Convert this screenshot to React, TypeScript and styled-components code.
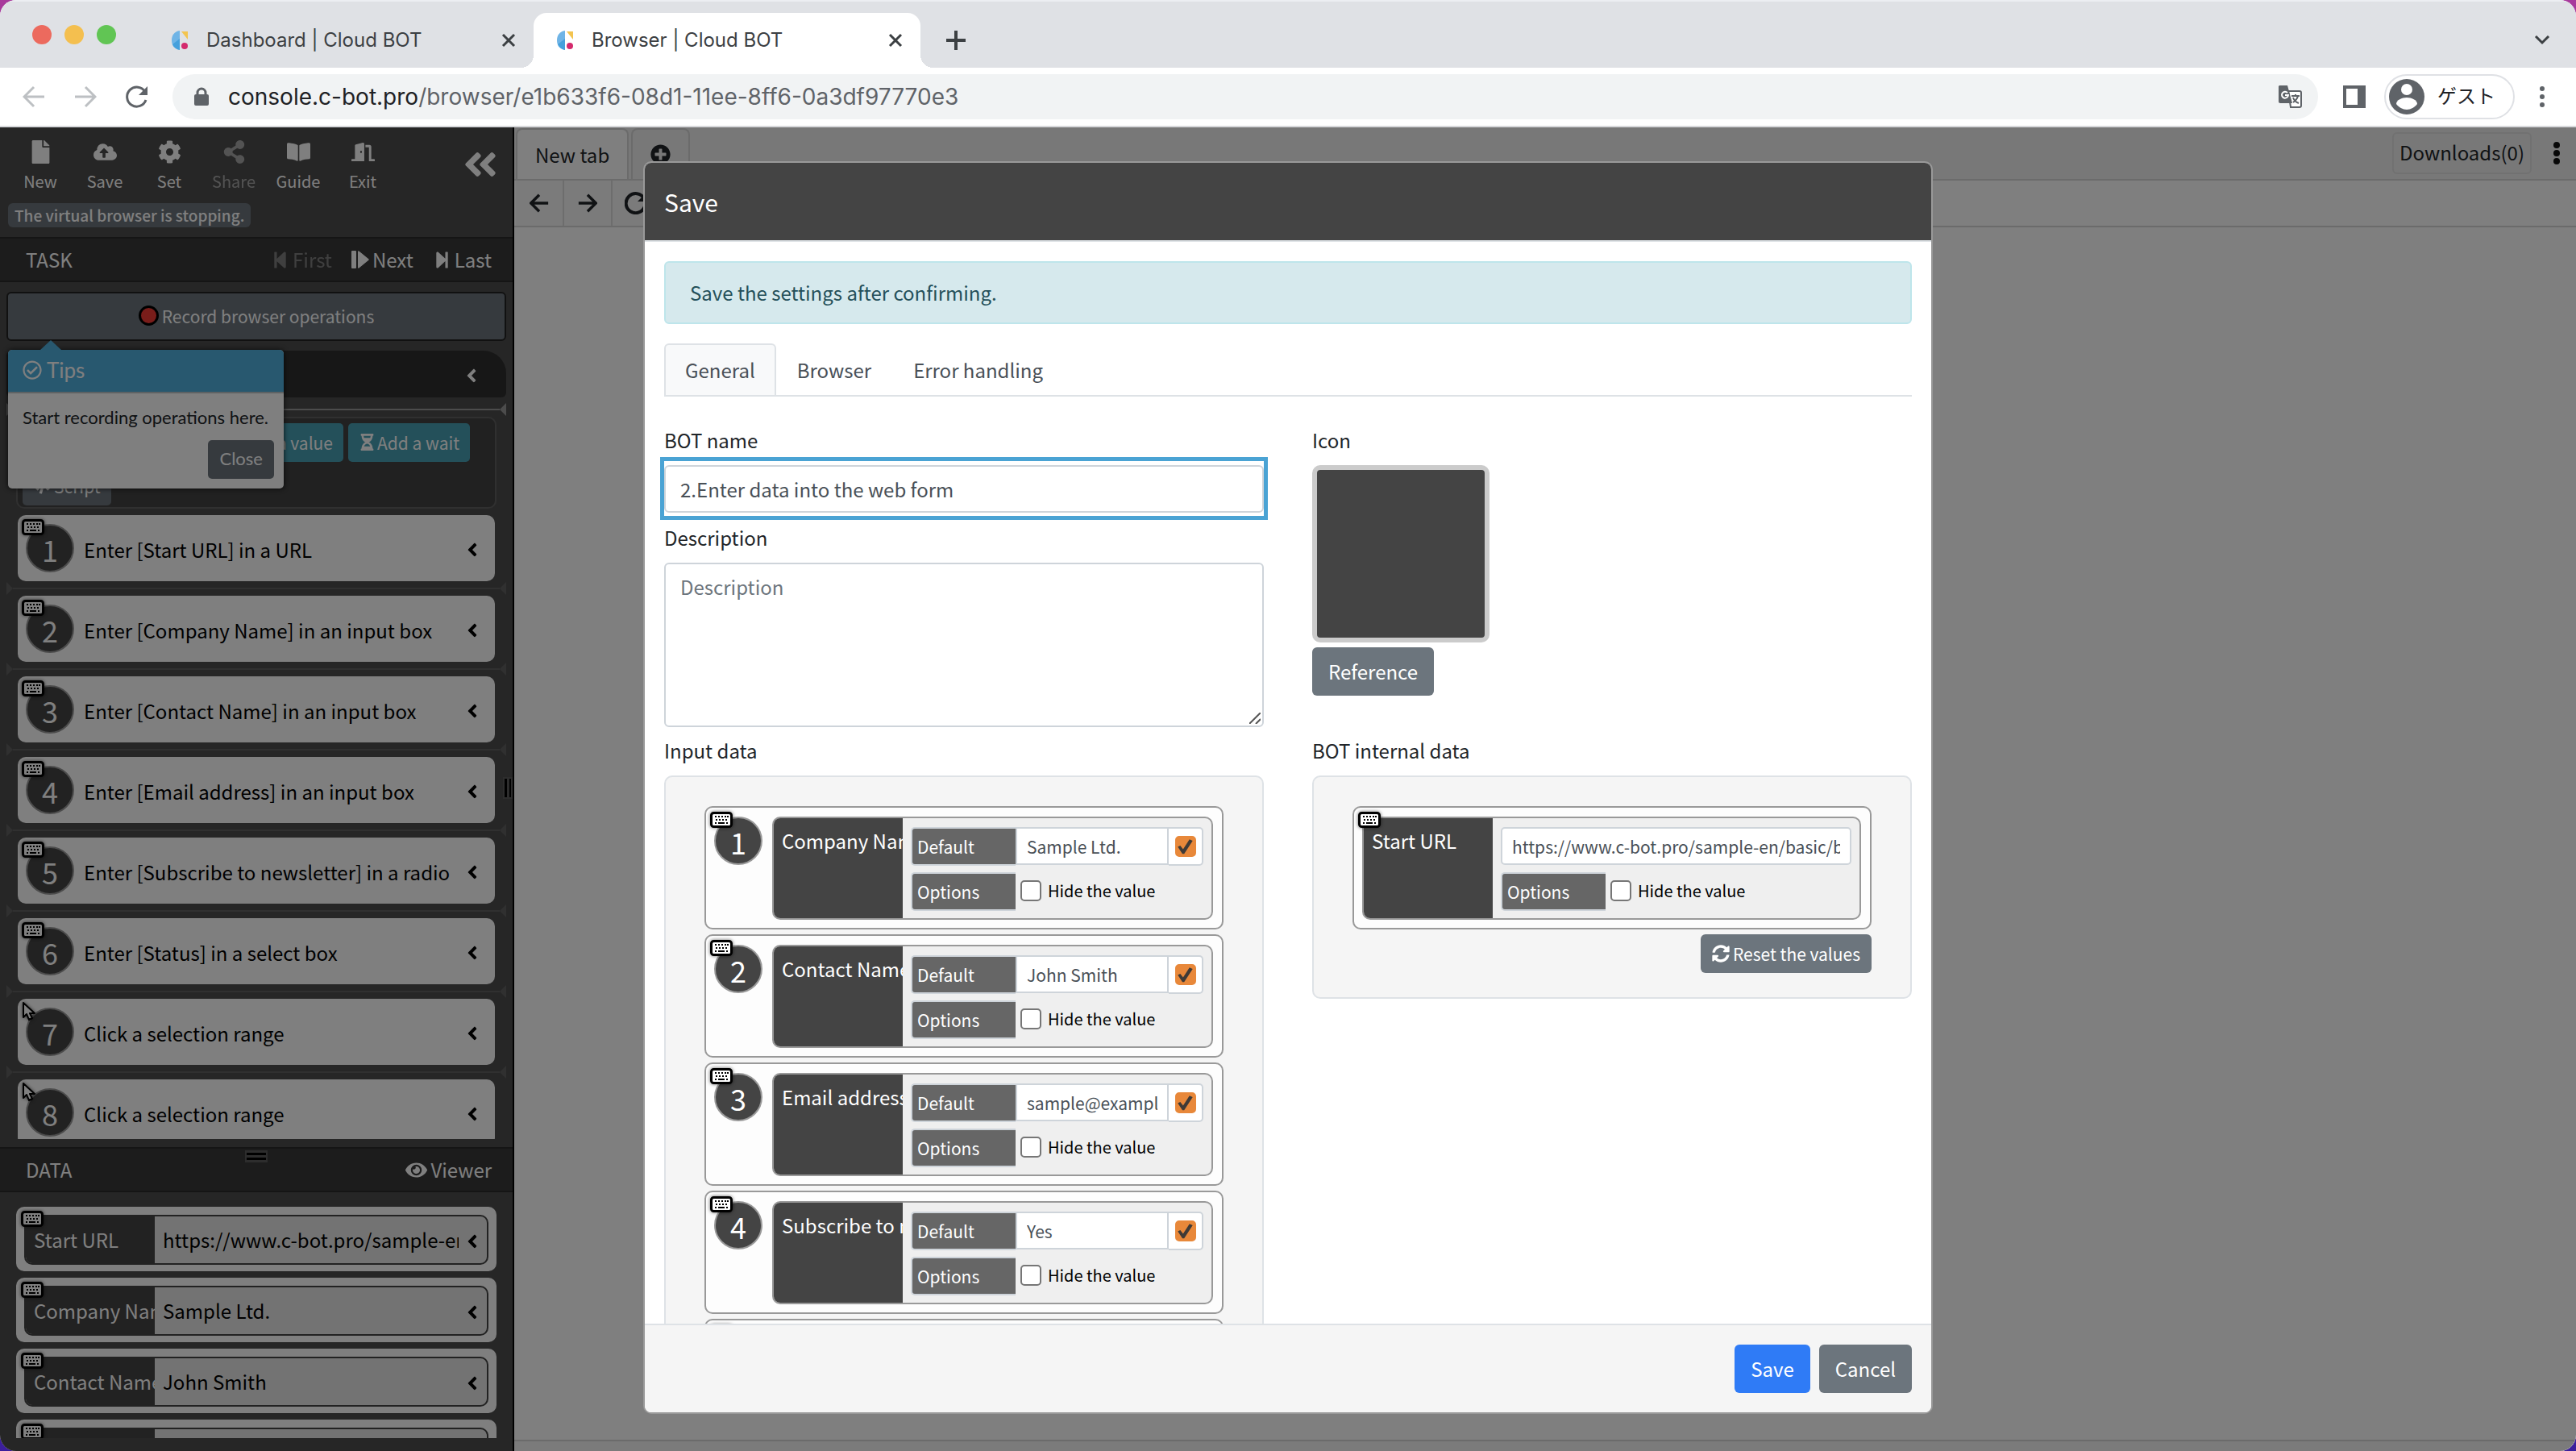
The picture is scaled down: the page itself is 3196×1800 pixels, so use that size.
import React from "react";
import styled, { createGlobalStyle, css } from "styled-components";
import {
  FaFile,
  FaCloudUploadAlt,
  FaCog,
  FaShareAlt,
  FaBookOpen,
  FaDoorOpen,
  FaAngleDoubleLeft,
  FaAngleLeft,
  FaStepBackward,
  FaStepForward,
  FaHourglassHalf,
  FaCode,
  FaEye,
  FaPlusCircle,
  FaSyncAlt,
  FaRegCheckCircle,
} from "react-icons/fa";

const appFont = '"Noto Sans CJK JP", "Noto Sans", sans-serif';
const chromeFont = 'Inter, "Noto Sans CJK JP", sans-serif';

const Global = createGlobalStyle`
  *, *::before, *::after { box-sizing: border-box; }
  html, body, #root { height: 100%; }
  body {
    margin: 0;
    overflow: hidden;
    font-family: ${appFont};
    font-size: 24px;
    line-height: 36px;
    color: #212529;
    background: linear-gradient(#a83a9c, #3b1e9c);
  }
  button, input, textarea { font: inherit; margin: 0; }
  button { padding: 0; border: 0; background: none; color: inherit; cursor: pointer; }
  svg { display: block; flex: none; }
`;

const Window = styled.div`
  height: 100vh;
  display: flex;
  flex-direction: column;
  border-radius: 20px;
  overflow: hidden;
  background: #fff;
`;

/* ---------- browser chrome ---------- */

const TabStrip = styled.div`
  display: flex;
  align-items: flex-end;
  height: 84px;
  padding-left: 40px;
  background: #dfe1e5;
  border-top: 2px solid #eceef2;
  font-family: ${chromeFont};
`;

const Lights = styled.div`
  display: flex;
  align-self: center;
  gap: 16px;
  width: 144px;
`;

const Light = styled.button<{ $color: string }>`
  width: 24px;
  height: 24px;
  border-radius: 50%;
  background: ${(p) => p.$color};
`;

const BrowserTab = styled.div<{ $active?: boolean }>`
  position: relative;
  display: flex;
  align-items: center;
  gap: 20px;
  width: ${(p) => (p.$active ? 480 : 478)}px;
  height: 68px;
  padding: 0 22px 0 28px;
  font-size: 24px;
  color: #3c4043;
  border-radius: 16px 16px 0 0;
  ${(p) =>
    p.$active &&
    css`
      background: #fff;
      &::before,
      &::after {
        content: "";
        position: absolute;
        bottom: 0;
        width: 16px;
        height: 16px;
      }
      &::before {
        right: 100%;
        background: radial-gradient(circle at 0 0, transparent 16px, #fff 16px);
      }
      &::after {
        left: 100%;
        background: radial-gradient(circle at 100% 0, transparent 16px, #fff 16px);
      }
    `}
`;

const TabTitle = styled.span`
  flex: 1;
  white-space: nowrap;
`;

const PlusButton = styled.button`
  margin: 0 auto 22px 32px;
`;

const ChevronButton = styled.button`
  margin: 0 32px 28px 0;
`;

const AddressRow = styled.div`
  display: flex;
  align-items: center;
  height: 74px;
  padding: 0 38px 0 28px;
  border-bottom: 2px solid #d8d9dc;
  background: #fff;
  font-family: ${chromeFont};
`;

const NavGroup = styled.div`
  display: flex;
  gap: 36px;
  width: 186px;
`;

const Omnibox = styled.div`
  flex: 1;
  display: flex;
  align-items: center;
  height: 56px;
  padding: 0 20px 0 27px;
  border-radius: 28px;
  background: #f1f3f4;
`;

const Url = styled.div`
  flex: 1;
  margin-left: 24px;
  font-size: 28px;
  color: #5f6368;
  b {
    font-weight: 400;
    color: #202124;
  }
`;

const SideButton = styled.button`
  margin: 0 23px 0 31px;
`;

const Profile = styled.button`
  display: flex;
  align-items: center;
  gap: 16px;
  height: 56px;
  padding: 0 22px 0 4px;
  margin-right: 30px;
  border: 2px solid #dfe1e5;
  border-radius: 28px;
  font-size: 24px;
  color: #202124;
`;

/* ---------- application ---------- */

const Workspace = styled.div`
  position: relative;
  flex: 1;
  min-height: 0;
  display: flex;
`;

const Sidebar = styled.aside`
  position: relative;
  display: flex;
  flex-direction: column;
  width: 638px;
  background: #4c4c4c;
  border-right: 2px solid #000;
  color: #fff;
`;

const ToolHead = styled.div`
  height: 136px;
`;

const ToolRow = styled.div`
  display: flex;
  height: 92px;
  padding: 16px 16px 0 10px;
`;

const Tool = styled.button<{ $dim?: boolean }>`
  display: flex;
  flex-direction: column;
  align-items: center;
  gap: 7px;
  width: 80px;
  height: 66px;
  font-size: 20px;
  line-height: 30px;
  opacity: ${(p) => (p.$dim ? 0.5 : 1)};
  svg {
    width: auto;
    height: 29px;
  }
`;

const Collapse = styled.button`
  height: 60px;
  margin-left: auto;
`;

const StatusBadge = styled.span`
  display: inline-block;
  height: 30px;
  margin: 2px 0 0 10px;
  padding: 0 8px;
  border-radius: 6px;
  background: #6c757d;
  font-size: 19px;
  font-weight: 500;
  line-height: 29px;
  vertical-align: top;
`;

const SectionBar = styled.div`
  position: relative;
  flex: none;
  display: flex;
  align-items: center;
  gap: 24px;
  height: 56px;
  padding: 0 26px 0 32px;
  background: #393939;
  border-top: 2px solid #2a2a2a;
  border-bottom: 2px solid #2a2a2a;
`;

const SectionTitle = styled.h2`
  flex: 1;
  margin: 0;
  font-size: 24px;
  font-weight: 400;
`;

const BarButton = styled.button<{ $dim?: boolean }>`
  display: flex;
  align-items: center;
  gap: 4px;
  opacity: ${(p) => (p.$dim ? 0.35 : 1)};
`;

const TaskScroll = styled.div`
  flex: 1;
  min-height: 0;
  margin-bottom: 10px;
  padding: 12px 8px 0;
  overflow: hidden;
`;

const RecordButton = styled.button`
  display: flex;
  align-items: center;
  justify-content: center;
  gap: 4px;
  width: 100%;
  height: 61px;
  padding-bottom: 2px;
  border: 2px solid #222;
  border-radius: 6px;
  background: #6c757d;
  font-size: 21px;
`;

const RecordDot = styled.i`
  width: 25px;
  height: 25px;
  border: 3px solid #000;
  border-radius: 50%;
  background: #f23a35;
`;

const StartBar = styled.div`
  display: flex;
  align-items: center;
  justify-content: flex-end;
  height: 58px;
  margin: 12px 0 6px;
  padding-right: 30px;
  border-radius: 6px 28px 6px 6px;
  background: #2f2f2f;
`;

const Chevron = styled(FaAngleLeft)`
  width: 26px;
  height: 26px;
  margin-top: 3px;
`;

const Separator = styled.div<{ $bright?: boolean }>`
  display: flex;
  align-items: center;
  height: 18px;
  color: ${(p) => (p.$bright ? "#999" : "#606060")};
  &::before,
  &::after {
    content: "";
    width: 8px;
    height: 16px;
    background: currentColor;
    clip-path: polygon(0 0, 100% 50%, 0 100%);
  }
  &::after {
    clip-path: polygon(100% 0, 0 50%, 100% 100%);
  }
`;

const SeparatorLine = styled.i`
  flex: 1;
  height: 2px;
  background: currentColor;
`;

const ActionBox = styled.div`
  display: flex;
  flex-wrap: wrap;
  gap: 6px;
  height: 114px;
  margin: 0 12px 8px;
  padding: 6px 6px 2px;
  border: 2px solid #606060;
  border-radius: 10px;
  background: #424242;
`;

const ActionButton = styled.button<{ $gray?: boolean; $wide?: boolean }>`
  display: flex;
  align-items: center;
  justify-content: flex-end;
  gap: 2px;
  height: 48px;
  width: ${(p) => (p.$wide ? "398px" : "auto")};
  padding: 0 13px 1px;
  border-radius: 5px;
  background: ${(p) => (p.$gray ? "#6c757d" : "#48a0b4")};
  font-size: 21px;
`;

const TaskCard = styled.div`
  position: relative;
  display: flex;
  align-items: center;
  height: 82px;
  margin: 0 14px;
  padding: 0 15px 0 10px;
  border-radius: 10px;
  background: #fff;
  color: #000;
`;

const CardText = styled.span`
  flex: 1;
  margin-left: 12px;
  padding-top: 3px;
  white-space: nowrap;
`;

const StepNumber = styled.span`
  display: flex;
  flex: none;
  justify-content: center;
  width: 60px;
  height: 60px;
  border: 2px solid #999;
  border-radius: 50%;
  background: #444;
  color: #fff;
  font-size: 36px;
  line-height: 58px;
`;

const Corner = styled.span<{ $x: number; $y: number }>`
  position: absolute;
  left: ${(p) => p.$x}px;
  top: ${(p) => p.$y}px;
  filter: drop-shadow(0 0 2px rgba(0, 0, 0, 0.6));
`;

const DataList = styled.div`
  flex: none;
  display: flex;
  flex-direction: column;
  gap: 8px;
  height: 305px;
  margin-bottom: 16px;
  padding: 18px 20px 0;
  overflow: hidden;
`;

const DataCard = styled.div`
  position: relative;
  flex: none;
  height: 80px;
  padding: 10px;
  border-radius: 10px;
  background: #fff;
`;

const DataInner = styled.div`
  display: flex;
  align-items: center;
  height: 62px;
  border: 2px solid #444;
  border-radius: 10px;
  background: #e6e6e6;
  color: #000;
  overflow: hidden;
  white-space: nowrap;
`;

const DataName = styled.span`
  flex: none;
  width: 160px;
  height: 58px;
  padding: 0 0 0 10px;
  overflow: hidden;
  background: #444;
  color: #fff;
  line-height: 58px;
`;

const DataValue = styled.span`
  flex: 1;
  min-width: 0;
  margin: 0 4px 0 10px;
  overflow: hidden;
`;

const DataChevron = styled.span`
  flex: none;
  margin-right: 5px;
`;

const RowGrip = styled.span`
  position: absolute;
  left: calc(50% - 14px);
  top: 2px;
  display: flex;
  flex-direction: column;
  gap: 3px;
  padding: 3px 2px;
  width: 28px;
  background: #5a5a5a;
  i {
    height: 3px;
    background: #000;
  }
`;

const ColGrip = styled.span`
  position: absolute;
  right: 0;
  top: 806px;
  display: flex;
  gap: 3px;
  width: 12px;
  height: 27px;
  padding: 2px;
  background: #5a5a5a;
  i {
    width: 3px;
    background: #000;
  }
`;

/* ---------- tips popover ---------- */

const Popover = styled.div`
  position: absolute;
  left: 10px;
  top: 276px;
  width: 342px;
  border-radius: 5px;
  background: #fff;
  box-shadow: 0 0 6px rgba(0, 0, 0, 0.8);
  font-family: Lato, sans-serif;
  &::before {
    content: "";
    position: absolute;
    left: 40px;
    top: -12px;
    width: 26px;
    height: 12px;
    background: #50b0de;
    clip-path: polygon(50% 0, 100% 100%, 0 100%);
  }
`;

const PopoverHead = styled.div`
  display: flex;
  align-items: center;
  gap: 6px;
  height: 54px;
  padding: 0 18px 2px;
  border-radius: 5px 5px 0 0;
  background: #50b0de;
  border-bottom: 2px solid #bcc4c8;
  font-size: 26px;
`;

const PopoverBody = styled.div`
  display: flex;
  flex-direction: column;
  height: 118px;
  padding: 12px 12px 12px 18px;
  color: #212529;
  font-size: 22px;
`;

const PopoverClose = styled.button`
  align-self: flex-end;
  height: 48px;
  margin-top: 10px;
  padding: 0 14px 2px;
  border-radius: 5px;
  background: #6c757d;
  color: #fff;
`;

/* ---------- remote browser ---------- */

const Remote = styled.main`
  flex: 1;
  min-width: 0;
  display: flex;
  flex-direction: column;
  background: #fff;
`;

const RemoteTabs = styled.div`
  display: flex;
  align-items: flex-end;
  gap: 3px;
  height: 66px;
  padding: 1px 16px 0 2px;
  border-bottom: 2px solid #d6d6d6;
  background: #f0f0f0;
`;

const RemoteTab = styled.button<{ $active?: boolean }>`
  display: flex;
  align-items: center;
  justify-content: center;
  height: 63px;
  padding: 0 22px;
  border: 2px solid #d6d6d6;
  border-bottom: 0;
  border-radius: 8px 8px 0 0;
  background: ${(p) => (p.$active ? "#fff" : "#f0f0f0")};
`;

const Downloads = styled.button`
  align-self: flex-start;
  height: 52px;
  margin: 5px 24px 0 auto;
  padding: 0 7px 3px;
  border: 2px solid #e2e2e2;
  border-radius: 6px;
`;

const KebabSlot = styled.button`
  align-self: flex-start;
  margin: 17px 4px 0 0;
`;

const RemoteNav = styled.div`
  display: flex;
  height: 58px;
  border-bottom: 2px solid #d6d6d6;
  padding-left: 2px;
`;

const RemoteNavButton = styled.button`
  display: flex;
  align-items: center;
  justify-content: center;
  width: 60px;
  border-right: 2px solid #dadada;
  background: #f6f6f6;
  color: #212529;
`;

const RemoteFoot = styled.div`
  height: 14px;
  margin-top: auto;
  border-top: 2px solid #d6d6d6;
  background: #f6f6f6;
`;

/* ---------- save dialog ---------- */

const Backdrop = styled.div`
  position: absolute;
  inset: 0;
  display: flex;
  justify-content: center;
  padding: 42px 32px 46px;
  background: rgba(0, 0, 0, 0.5);
`;

const Dialog = styled.form`
  display: flex;
  flex-direction: column;
  width: 100%;
  max-width: 1600px;
  border: 2px solid #999;
  border-radius: 10px;
  background: #fff;
  overflow: hidden;
`;

const DialogHead = styled.header`
  flex: none;
  height: 98px;
  padding: 0 24px;
  border-bottom: 2px solid #dee2e6;
  background: #444;
  color: #fff;
  h1 {
    margin: 0;
    font-size: 30px;
    font-weight: 400;
    line-height: 96px;
  }
`;

const DialogBody = styled.div`
  flex: 1;
  min-height: 0;
  padding: 24px;
  overflow: hidden;
`;

const Alert = styled.div`
  height: 78px;
  padding: 0 30px;
  border: 2px solid #bee5eb;
  border-radius: 6px;
  background: #d6e9ed;
  color: #24505a;
  line-height: 74px;
`;

const Tabs = styled.div`
  display: flex;
  height: 66px;
  margin: 24px 0 36px;
  border-bottom: 2px solid #dee2e6;
`;

const Tab = styled.button<{ $active?: boolean }>`
  height: 64px;
  padding: 0 24px;
  border: 2px solid ${(p) => (p.$active ? "#dee2e6" : "transparent")};
  border-bottom: 0;
  border-radius: 6px 6px 0 0;
  background: ${(p) => (p.$active ? "#f8f9fa" : "transparent")};
  color: #495057;
`;

const FormGrid = styled.div`
  display: grid;
  grid-template-columns: repeat(2, minmax(0, 1fr));
  gap: 11px 60px;
  align-items: start;
`;

const Label = styled.label`
  display: block;
  margin-bottom: 13px;
`;

const Highlight = styled.div`
  margin: -5px 0 9px;
  padding: 5px 0 4px;
  outline: 5px solid #4aa3d4;
`;

const TextInput = styled.input`
  display: block;
  width: 100%;
  height: 59px;
  padding: 2px 18px;
  border: 2px solid #ced4da;
  border-radius: 6px;
  background: #fff;
  color: #495057;
`;

const TextArea = styled.textarea`
  display: block;
  width: 100%;
  height: 204px;
  padding: 10px 18px;
  border: 2px solid #ced4da;
  border-radius: 6px;
  resize: none;
  &::placeholder {
    color: #6c757d;
  }
`;

const AreaWrap = styled.div`
  position: relative;
  svg {
    position: absolute;
    right: 4px;
    bottom: 4px;
  }
`;

const IconPreview = styled.div`
  width: 220px;
  height: 220px;
  margin-bottom: 6px;
  border: 6px solid #cbcbcb;
  border-radius: 10px;
  background: #444;
`;

const Button = styled.button<{ $primary?: boolean; $small?: boolean }>`
  display: flex;
  align-items: center;
  gap: 4px;
  height: ${(p) => (p.$small ? 48 : 60)}px;
  padding: 0 ${(p) => (p.$small ? 14 : 20)}px;
  border-radius: 6px;
  background: ${(p) => (p.$primary ? "#2f7bf6" : "#6c757d")};
  color: #fff;
  font-size: ${(p) => (p.$small ? 21 : 24)}px;
`;

const Panel = styled.div`
  display: flex;
  flex-direction: column;
  gap: 6px;
  padding: 36px 48px 30px;
  border: 2px solid #dee2e6;
  border-radius: 10px;
  background: #f5f5f5;
  ${Button} {
    align-self: flex-end;
  }
`;

const Entry = styled.div`
  position: relative;
  display: flex;
  align-items: flex-start;
  gap: 12px;
  height: 153px;
  padding: 11px 11px 10px 10px;
  border: 2px solid #999;
  border-radius: 10px;
  background: #fdfdfd;
`;

const EntryInner = styled.div`
  flex: 1;
  min-width: 0;
  display: flex;
  height: 128px;
  border: 2px solid #999;
  border-radius: 10px;
  background: #efefef;
  overflow: hidden;
`;

const EntryName = styled.span`
  flex: none;
  width: 160px;
  padding: 10px 0 0 10px;
  overflow: hidden;
  background: #444;
  color: #fff;
  white-space: nowrap;
`;

const Fields = styled.div`
  flex: 1;
  min-width: 0;
  display: flex;
  flex-direction: column;
  gap: 8px;
  padding: 11px 10px 0 10px;
`;

const FieldRow = styled.div`
  display: flex;
  height: 48px;
`;

const Addon = styled.span`
  width: 130px;
  padding: 0 6px;
  border: 2px solid #ced4da;
  border-right: 0;
  border-radius: 5px 0 0 5px;
  background: #666;
  color: #fff;
  font-size: 21px;
  line-height: 44px;
`;

const ValueInput = styled.input<{ $full?: boolean }>`
  flex: 1;
  min-width: 0;
  height: 47px;
  padding: 2px 12px;
  border: 2px solid #ced4da;
  border-radius: ${(p) => (p.$full ? 5 : 0)}px;
  background: #fff;
  color: #495057;
  font-size: 21px;
`;

const CheckSlot = styled.span`
  display: flex;
  align-items: center;
  justify-content: center;
  width: 43px;
  border: 2px solid #ced4da;
  border-left: 0;
  border-radius: 0 5px 5px 0;
  background: #fff;
`;

const CheckBox = styled.input`
  appearance: none;
  flex: none;
  width: 26px;
  height: 26px;
  border: 2px solid #767676;
  border-radius: 5px;
  background: #fff;
  &:checked {
    border-color: #e8883a;
    background: #e8883a;
  }
  &:checked::before {
    content: "";
    display: block;
    width: 22px;
    height: 22px;
    background: #3f3a36;
    clip-path: polygon(8% 52%, 22% 46%, 38% 66%, 74% 10%, 92% 18%, 44% 92%, 34% 92%);
  }
`;

const HideLabel = styled.label`
  display: flex;
  align-items: center;
  gap: 8px;
  margin: 0 0 3px 6px;
  color: #000;
  font-size: 20px;
`;

const DialogFoot = styled.footer`
  flex: none;
  display: flex;
  align-items: center;
  justify-content: flex-end;
  gap: 11px;
  height: 110px;
  padding: 0 24px;
  border-top: 2px solid #dee2e6;
  background: #f5f5f5;
`;

/* ---------- drawings ---------- */

const Favicon = () => (
  <svg width="24" height="24" viewBox="0 0 24 24">
    <path d="M11 0v24C4 23 1 18 1 12S4 1 11 0z" fill="#6fb4e6" />
    <path d="M11 10v14c-4-1-7-3-9-7z" fill="#45a0dc" />
    <path d="M13 1h8v10z" fill="#f3c44f" />
    <circle cx="17" cy="19" r="4" fill="#d42a6d" />
  </svg>
);

const Cross = () => (
  <svg width="18" height="18" viewBox="0 0 18 18" stroke="#3c4043" strokeWidth="3">
    <path d="M2 2l14 14M16 2L2 16" />
  </svg>
);

const Arrow = ({ flip, color, bold }: { flip?: boolean; color: string; bold?: boolean }) => (
  <svg
    width={bold ? 24 : 28}
    height={bold ? 24 : 28}
    viewBox="0 0 28 28"
    fill="none"
    stroke={color}
    strokeWidth={bold ? 4 : 3}
  >
    <path d={flip ? "M1 14h24M14 2l12 12-12 12" : "M27 14H3M14 2L2 14l12 12"} />
  </svg>
);

const Reload = ({ color, width }: { color: string; width: number }) => (
  <svg width="28" height="28" viewBox="0 0 28 28" fill="none">
    <path d="M24 8A12 12 0 1 0 25 18" stroke={color} strokeWidth={width} />
    <path d="M27 1v11H16z" fill={color} />
  </svg>
);

const Lock = () => (
  <svg width="18" height="24" viewBox="0 0 18 24">
    <path d="M4 10V7a5 5 0 0 1 10 0v3" fill="none" stroke="#5f6368" strokeWidth="3" />
    <rect x="0" y="9" width="18" height="14" rx="2" fill="#5f6368" />
  </svg>
);

const Translate = () => (
  <svg width="30" height="30" viewBox="0 0 30 30">
    <path d="M13 8h14a2 2 0 0 1 2 2v16a2 2 0 0 1-2 2H16z" fill="#fff" stroke="#5f6368" strokeWidth="2" />
    <path d="M2 1h10l6 22H3a2 2 0 0 1-2-2V2z" fill="#5f6368" />
    <path d="M12 10a4 4 0 1 0 1 3h-4" fill="none" stroke="#fff" strokeWidth="2" />
    <path d="M17 14h10M22 12v2M25 14c-1 4-3 6-6 8M19 16c1 3 4 6 7 7" fill="none" stroke="#5f6368" strokeWidth="2" />
  </svg>
);

const SidePanel = () => (
  <svg width="28" height="28" viewBox="0 0 28 28">
    <path fillRule="evenodd" d="M0 0h28v28H0zM4 4v20h14V4z" fill="#5f6368" />
  </svg>
);

const Avatar = () => (
  <svg width="44" height="44" viewBox="0 0 44 44">
    <circle cx="22" cy="22" r="22" fill="#5f6368" />
    <circle cx="22" cy="13" r="7" fill="#fff" />
    <path d="M9 31c0-5 7-8 13-8s13 3 13 8c-3 4-8 7-13 7s-10-3-13-7z" fill="#fff" />
  </svg>
);

const Dots = ({ color, r }: { color: string; r: number }) => (
  <svg width="8" height="28" viewBox="0 0 8 28" fill={color}>
    <circle cx="4" cy="4" r={r} />
    <circle cx="4" cy="14" r={r} />
    <circle cx="4" cy="24" r={r} />
  </svg>
);

const NextIcon = () => (
  <svg width="22" height="22" viewBox="0 0 22 22" fill="#fff">
    <rect x="0" y="0" width="6" height="22" rx="1" />
    <path d="M8 1c0-1 1-1 2 0l11 9c1 1 1 1 0 2l-11 9c-1 1-2 1-2 0z" />
  </svg>
);

const KeyboardIcon = () => (
  <svg width="28" height="20" viewBox="0 0 28 20">
    <rect x="1.5" y="1.5" width="25" height="17" rx="3" fill="#fff" stroke="#000" strokeWidth="3" />
    <path
      d="M6 6h2M10 6h2M14 6h2M18 6h2M21 6h2M7 10h2M11 10h2M15 10h2M19 10h2M6 14h2M10 14h8M20 14h2"
      stroke="#000"
      strokeWidth="2"
    />
  </svg>
);

const PointerIcon = () => (
  <svg width="18" height="25" viewBox="0 0 18 25">
    <path
      d="M2 2v18l4-4 3 7 4-2-3-6h6z"
      fill="#fff"
      stroke="#000"
      strokeWidth="2"
      strokeLinejoin="round"
    />
  </svg>
);

const Resizer = () => (
  <svg width="14" height="14" viewBox="0 0 14 14" stroke="#555" strokeWidth="2">
    <path d="M0 14L14 0M8 14l6-6" />
  </svg>
);

/* ---------- data ---------- */

const tasks = [
  { text: "Enter [Start URL] in a URL" },
  { text: "Enter [Company Name] in an input box" },
  { text: "Enter [Contact Name] in an input box" },
  { text: "Enter [Email address] in an input box" },
  { text: "Enter [Subscribe to newsletter] in a radio" },
  { text: "Enter [Status] in a select box" },
  { text: "Click a selection range", click: true },
  { text: "Click a selection range", click: true },
];

const data = [
  ["Start URL", "https://www.c-bot.pro/sample-en/basic"],
  ["Company Name", "Sample Ltd."],
  ["Contact Name", "John Smith"],
  ["Email address", "sample@example.com"],
];

const inputs = [
  ["Company Name", "Sample Ltd."],
  ["Contact Name", "John Smith"],
  ["Email address", "sample@example.com"],
  ["Subscribe to newsletter", "Yes"],
  ["Status", "Customer"],
];

const HideOption = ({ id }: { id: string }) => (
  <FieldRow>
    <Addon>Options</Addon>
    <HideLabel htmlFor={id}>
      <CheckBox type="checkbox" id={id} />
      Hide the value
    </HideLabel>
  </FieldRow>
);

export default function App() {
  return (
    <>
      <Global />
      <Window>
        <TabStrip>
          <Lights>
            <Light $color="#ec6a5e" aria-label="Close window" />
            <Light $color="#f4bf4f" aria-label="Minimize window" />
            <Light $color="#61c554" aria-label="Zoom window" />
          </Lights>
          <BrowserTab>
            <Favicon />
            <TabTitle>Dashboard | Cloud BOT</TabTitle>
            <button aria-label="Close tab"><Cross /></button>
          </BrowserTab>
          <BrowserTab $active>
            <Favicon />
            <TabTitle>Browser | Cloud BOT</TabTitle>
            <button aria-label="Close tab"><Cross /></button>
          </BrowserTab>
          <PlusButton aria-label="New tab">
            <svg width="24" height="24" viewBox="0 0 24 24" stroke="#3c4043" strokeWidth="4">
              <path d="M12 0v24M0 12h24" />
            </svg>
          </PlusButton>
          <ChevronButton aria-label="Search tabs">
            <svg width="20" height="12" viewBox="0 0 20 12" fill="none" stroke="#3c4043" strokeWidth="3">
              <path d="M2 1l8 8 8-8" />
            </svg>
          </ChevronButton>
        </TabStrip>
        <AddressRow>
          <NavGroup>
            <button aria-label="Back"><Arrow color="#bdc0c3" /></button>
            <button aria-label="Forward"><Arrow color="#bdc0c3" flip /></button>
            <button aria-label="Reload"><Reload color="#5f6368" width={3} /></button>
          </NavGroup>
          <Omnibox>
            <Lock />
            <Url>
              <b>console.c-bot.pro</b>/browser/e1b633f6-08d1-11ee-8ff6-0a3df97770e3
            </Url>
            <button aria-label="Translate"><Translate /></button>
          </Omnibox>
          <SideButton aria-label="Side panel"><SidePanel /></SideButton>
          <Profile>
            <Avatar />
            ゲスト
          </Profile>
          <button aria-label="Menu"><Dots color="#5f6368" r={3} /></button>
        </AddressRow>

        <Workspace>
          <Sidebar>
            <ToolHead>
              <ToolRow>
                <Tool><FaFile />New</Tool>
                <Tool><FaCloudUploadAlt />Save</Tool>
                <Tool><FaCog />Set</Tool>
                <Tool $dim><FaShareAlt />Share</Tool>
                <Tool><FaBookOpen />Guide</Tool>
                <Tool><FaDoorOpen />Exit</Tool>
                <Collapse aria-label="Collapse"><FaAngleDoubleLeft size={48} /></Collapse>
              </ToolRow>
              <StatusBadge>The virtual browser is stopping.</StatusBadge>
            </ToolHead>
            <SectionBar>
              <SectionTitle>TASK</SectionTitle>
              <BarButton $dim><FaStepBackward size={23} />First</BarButton>
              <BarButton><NextIcon />Next</BarButton>
              <BarButton><FaStepForward size={23} />Last</BarButton>
            </SectionBar>
            <TaskScroll>
              <RecordButton><RecordDot />Record browser operations</RecordButton>
              <StartBar><Chevron /></StartBar>
              <Separator $bright><SeparatorLine /></Separator>
              <ActionBox>
                <ActionButton $wide>a value</ActionButton>
                <ActionButton><FaHourglassHalf size={21} />Add a wait</ActionButton>
                <ActionButton $gray><FaCode size={24} />Script</ActionButton>
              </ActionBox>
              {tasks.map((t, i) => (
                <React.Fragment key={i}>
                  {i > 0 && <Separator><SeparatorLine /></Separator>}
                  <TaskCard>
                    <StepNumber>{i + 1}</StepNumber>
                    <Corner $x={5} $y={t.click ? 3 : 5}>
                      {t.click ? <PointerIcon /> : <KeyboardIcon />}
                    </Corner>
                    <CardText>{t.text}</CardText>
                    <Chevron />
                  </TaskCard>
                </React.Fragment>
              ))}
            </TaskScroll>
            <SectionBar>
              <SectionTitle>DATA</SectionTitle>
              <BarButton><FaEye size={27} />Viewer</BarButton>
              <RowGrip><i /><i /></RowGrip>
            </SectionBar>
            <DataList>
              {data.map(([name, value]) => (
                <DataCard key={name}>
                  <DataInner>
                    <DataName>{name}</DataName>
                    <DataValue>{value}</DataValue>
                    <DataChevron><Chevron /></DataChevron>
                  </DataInner>
                  <Corner $x={6} $y={5}><KeyboardIcon /></Corner>
                </DataCard>
              ))}
            </DataList>
            <ColGrip><i /><i /></ColGrip>
            <Popover>
              <PopoverHead><FaRegCheckCircle size={24} />Tips</PopoverHead>
              <PopoverBody>
                Start recording operations here.
                <PopoverClose>Close</PopoverClose>
              </PopoverBody>
            </Popover>
          </Sidebar>

          <Remote>
            <RemoteTabs>
              <RemoteTab $active>New tab</RemoteTab>
              <RemoteTab aria-label="Add tab"><FaPlusCircle size={25} /></RemoteTab>
              <Downloads>Downloads(0)</Downloads>
              <KebabSlot aria-label="More"><Dots color="#111" r={4} /></KebabSlot>
            </RemoteTabs>
            <RemoteNav>
              <RemoteNavButton aria-label="Back"><Arrow color="#212529" bold /></RemoteNavButton>
              <RemoteNavButton aria-label="Forward"><Arrow color="#212529" bold flip /></RemoteNavButton>
              <RemoteNavButton aria-label="Reload"><Reload color="#212529" width={4} /></RemoteNavButton>
            </RemoteNav>
            <RemoteFoot />
          </Remote>

          <Backdrop>
            <Dialog onSubmit={(e) => e.preventDefault()}>
              <DialogHead><h1>Save</h1></DialogHead>
              <DialogBody>
                <Alert>Save the settings after confirming.</Alert>
                <Tabs>
                  <Tab type="button" $active>General</Tab>
                  <Tab type="button">Browser</Tab>
                  <Tab type="button">Error handling</Tab>
                </Tabs>
                <FormGrid>
                  <div>
                    <Label htmlFor="bot-name">BOT name</Label>
                    <Highlight>
                      <TextInput id="bot-name" defaultValue="2.Enter data into the web form" />
                    </Highlight>
                    <Label htmlFor="bot-desc">Description</Label>
                    <AreaWrap>
                      <TextArea id="bot-desc" placeholder="Description" />
                      <Resizer />
                    </AreaWrap>
                  </div>
                  <div>
                    <Label as="div">Icon</Label>
                    <IconPreview />
                    <Button type="button">Reference</Button>
                  </div>
                  <div>
                    <Label as="div">Input data</Label>
                    <Panel>
                      {inputs.map(([name, value], i) => (
                        <Entry key={name}>
                          <StepNumber>{i + 1}</StepNumber>
                          <Corner $x={5} $y={5}><KeyboardIcon /></Corner>
                          <EntryInner>
                            <EntryName>{name}</EntryName>
                            <Fields>
                              <FieldRow>
                                <Addon>Default</Addon>
                                <ValueInput aria-label={name} defaultValue={value} />
                                <CheckSlot>
                                  <CheckBox type="checkbox" aria-label={`Use default ${name}`} defaultChecked />
                                </CheckSlot>
                              </FieldRow>
                              <HideOption id={`hide-${i}`} />
                            </Fields>
                          </EntryInner>
                        </Entry>
                      ))}
                    </Panel>
                  </div>
                  <div>
                    <Label as="div">BOT internal data</Label>
                    <Panel>
                      <Entry>
                        <Corner $x={5} $y={5}><KeyboardIcon /></Corner>
                        <EntryInner>
                          <EntryName>Start URL</EntryName>
                          <Fields>
                            <FieldRow>
                              <ValueInput
                                $full
                                aria-label="Start URL"
                                defaultValue="https://www.c-bot.pro/sample-en/basic/basic"
                              />
                            </FieldRow>
                            <HideOption id="hide-url" />
                          </Fields>
                        </EntryInner>
                      </Entry>
                      <Button type="button" $small><FaSyncAlt size={22} />Reset the values</Button>
                    </Panel>
                  </div>
                </FormGrid>
              </DialogBody>
              <DialogFoot>
                <Button type="submit" $primary>Save</Button>
                <Button type="button">Cancel</Button>
              </DialogFoot>
            </Dialog>
          </Backdrop>
        </Workspace>
      </Window>
    </>
  );
}
